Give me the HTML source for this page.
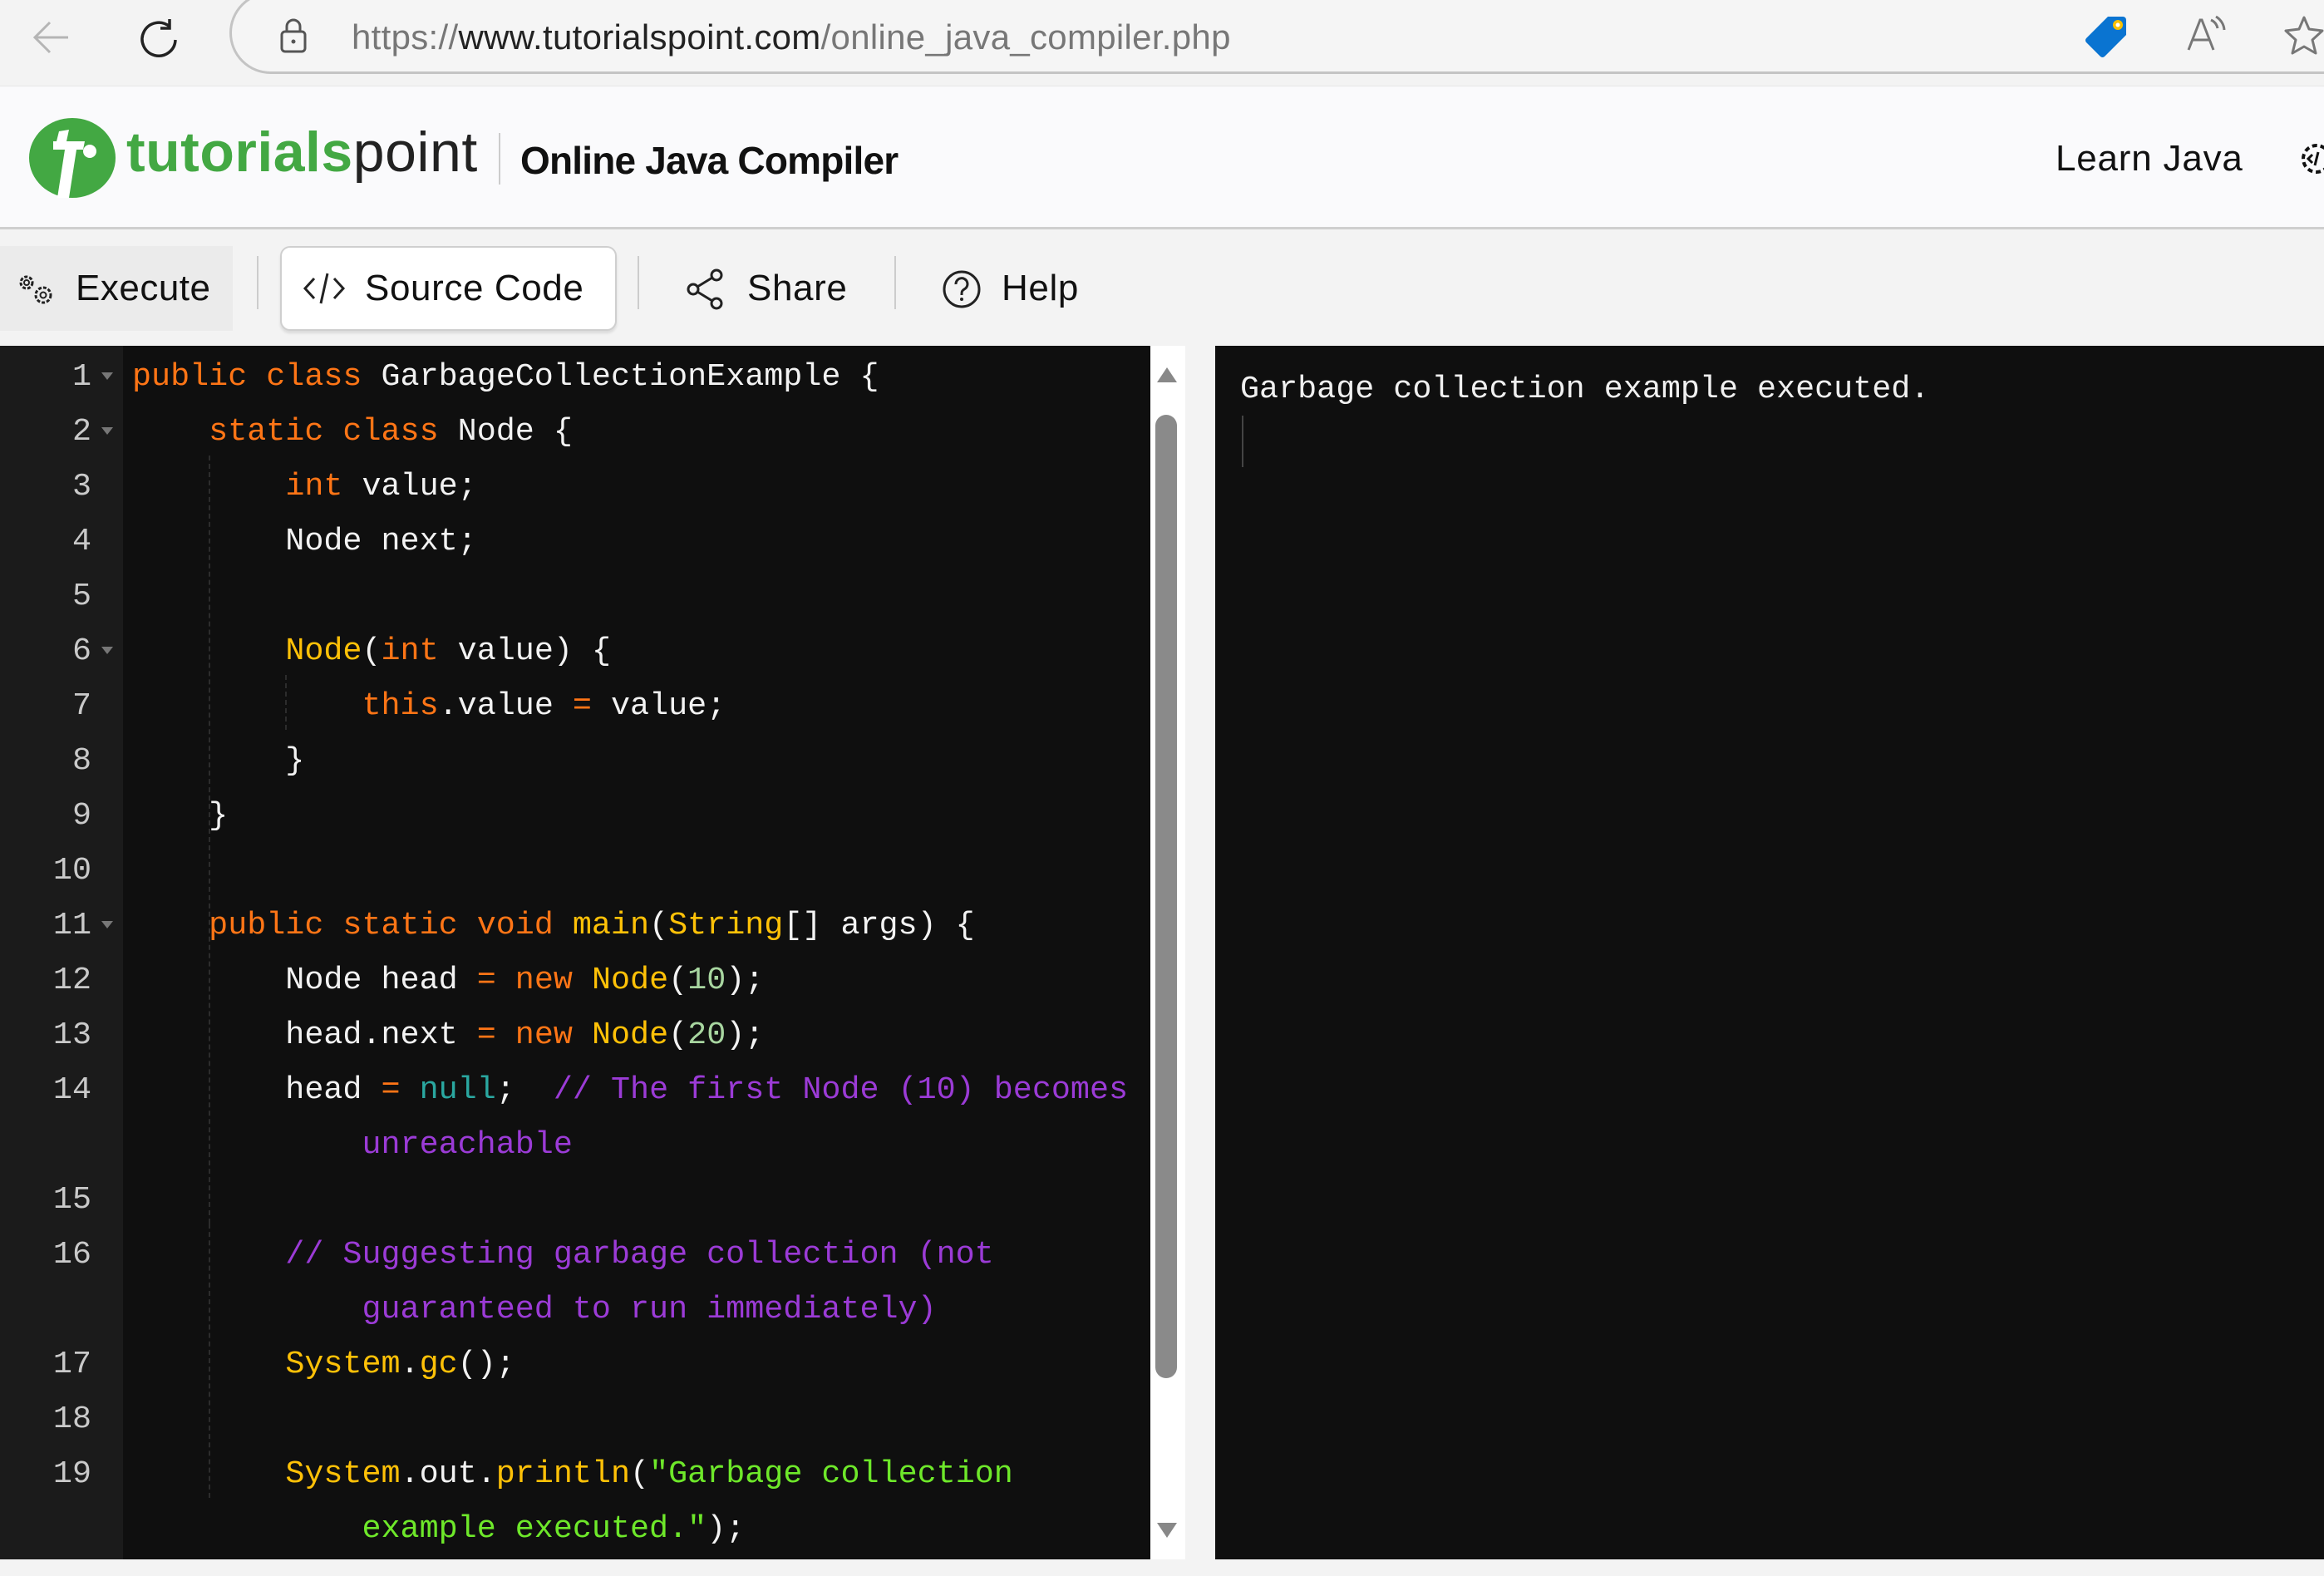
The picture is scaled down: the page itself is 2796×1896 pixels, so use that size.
<!DOCTYPE html>
<html><head><meta charset="utf-8"><style>
*{margin:0;padding:0;box-sizing:border-box}
body{width:2796px;height:1896px;overflow:hidden;background:#f3f3f3;font-family:"Liberation Sans",sans-serif;position:relative}
.abs{position:absolute}
#code{position:absolute;left:0;top:416px;width:1384px;height:1460px;background:#0f0f0f;overflow:hidden}
#gut{position:absolute;left:0;top:0;width:148px;height:100%;background:#1b1b1b}
.ln{position:absolute;left:0;width:110px;text-align:right;color:#c9c9c9;font:38.4px/66px "Liberation Mono",monospace;margin-top:4px}
.fold{position:absolute;left:122px;width:0;height:0;border-left:7px solid transparent;border-right:7px solid transparent;border-top:9px solid #777;margin-top:3px}
.cl{position:absolute;left:159px;white-space:pre;color:#f2f2f2;font:38.4px/66px "Liberation Mono",monospace;margin-top:4px}
.k{color:#ff7516}.y{color:#ffc107}.c{color:#9b3bd6}.n{color:#a8d6a0}.t{color:#2aa7a0}.s{color:#6ee82a}
.g{position:absolute;width:0;border-left:2px dashed #2c2c2c;height:66px}
</style></head><body>
<div class="abs" style="left:0;top:0;width:2796px;height:100px;background:#f3f3f3"></div>
<svg class="abs" style="left:36px;top:22px" width="50" height="46" viewBox="0 0 50 46"><path d="M46 23H6M24 5L6 23l18 18" fill="none" stroke="#b5b5b5" stroke-width="3"/></svg>
<svg class="abs" style="left:166px;top:20px" width="52" height="52" viewBox="0 0 52 52"><path d="M38 12A20 20 0 1 0 45 28" fill="none" stroke="#222" stroke-width="3.5"/><path d="M38 3v11H27" fill="none" stroke="#222" stroke-width="3.5"/></svg>
<div class="abs" style="left:276px;top:-10px;width:2600px;height:99px;border:3px solid #c4c4c4;border-radius:50px;background:#f5f5f5"></div>
<svg class="abs" style="left:334px;top:20px" width="40" height="46" viewBox="0 0 40 46"><rect x="5" y="18" width="28" height="24" rx="4" fill="none" stroke="#555" stroke-width="3"/><path d="M11 18v-6a8 8 0 0 1 16 0v6" fill="none" stroke="#555" stroke-width="3"/><circle cx="19" cy="30" r="2.5" fill="#555"/></svg>
<div class="abs" style="left:423px;top:21px;font-size:42px;color:#777;white-space:nowrap;letter-spacing:0.3px">https://<span style="color:#222">www.tutorialspoint.com</span>/online_java_compiler.php</div>
<svg class="abs" style="left:2508px;top:18px" width="52" height="52" viewBox="0 0 52 52"><path d="M28 2h18a4 4 0 0 1 4 4v18L24 50a4 4 0 0 1-5 0L2 33a4 4 0 0 1 0-5z" fill="#0a74d1"/><circle cx="40" cy="12" r="6" fill="#f7c000"/><circle cx="40" cy="12" r="2.5" fill="#fff"/></svg>
<svg class="abs" style="left:2630px;top:18px" width="50" height="46" viewBox="0 0 50 46"><path d="M3 42L17 6h2l14 36M8 30h20" fill="none" stroke="#777" stroke-width="3"/><path d="M30 6a14 14 0 0 1 8 10M36 2a20 20 0 0 1 10 16" fill="none" stroke="#777" stroke-width="3"/></svg>
<svg class="abs" style="left:2748px;top:18px" width="48" height="50" viewBox="0 0 48 50"><path d="M24 3l6 14 16 2-12 11 4 16-14-8-14 8 4-16L2 19l16-2z" fill="none" stroke="#777" stroke-width="3" stroke-linejoin="round"/></svg>
<div class="abs" style="left:0;top:103px;width:2796px;height:173px;background:#fafafc;border-top:1px solid #e6e6e6;border-bottom:3px solid #cfcfcf"></div>
<svg class="abs" style="left:34px;top:140px" width="106" height="100" viewBox="0 0 106 100"><ellipse cx="53" cy="50" rx="52" ry="48" fill="#43a843"/><path d="M30 40h14l-9 58h14l9-58h8l2-10H46l3-14-12 2-3 12h-4z" fill="#fff"/><circle cx="74" cy="42" r="8" fill="#fff"/></svg>
<div class="abs" style="left:152px;top:144px;font-size:68px;font-weight:bold;color:#43a843;letter-spacing:0.5px;white-space:nowrap">tutorials<span style="color:#222;font-weight:normal">point</span></div>
<div class="abs" style="left:600px;top:160px;width:2px;height:62px;background:#ccc"></div>
<div class="abs" style="left:626px;top:166px;font-size:46px;font-weight:bold;color:#111;white-space:nowrap;letter-spacing:-0.8px">Online Java Compiler</div>
<div class="abs" style="left:2473px;top:166px;font-size:44px;color:#111;white-space:nowrap;letter-spacing:0.8px">Learn Java</div>
<svg class="abs" style="left:2762px;top:166px" width="40" height="50" viewBox="0 0 40 50"><circle cx="25" cy="25" r="16" fill="none" stroke="#111" stroke-width="4" stroke-dasharray="6 4"/><path d="M20 20l-5 5 5 5M27 17l-4 16" fill="none" stroke="#111" stroke-width="3"/></svg>
<div class="abs" style="left:0;top:296px;width:280px;height:102px;background:#ebebeb"></div>
<svg class="abs" style="left:18px;top:326px" width="50" height="44" viewBox="0 0 50 44"><circle cx="14" cy="14" r="7" fill="none" stroke="#222" stroke-width="3" stroke-dasharray="4 2"/><circle cx="14" cy="14" r="3" fill="none" stroke="#222" stroke-width="2"/><circle cx="34" cy="29" r="9" fill="none" stroke="#222" stroke-width="3" stroke-dasharray="4 2"/><circle cx="34" cy="29" r="3.5" fill="none" stroke="#222" stroke-width="2"/></svg>
<div class="abs" style="left:91px;top:322px;font-size:44px;color:#111;letter-spacing:0.5px">Execute</div>
<div class="abs" style="left:309px;top:308px;width:2px;height:64px;background:#ccc"></div>
<div class="abs" style="left:337px;top:296px;width:405px;height:102px;background:#fff;border:2px solid #cfcfcf;border-radius:12px;box-shadow:0 3px 3px rgba(0,0,0,.1)"></div>
<svg class="abs" style="left:364px;top:326px" width="52" height="42" viewBox="0 0 52 42"><path d="M14 9L3 21l11 12M38 9l11 12-11 12M30 3l-8 36" fill="none" stroke="#222" stroke-width="3"/></svg>
<div class="abs" style="left:439px;top:322px;font-size:44px;color:#111;letter-spacing:0.6px">Source Code</div>
<div class="abs" style="left:767px;top:308px;width:2px;height:64px;background:#ccc"></div>
<svg class="abs" style="left:824px;top:322px" width="54" height="52" viewBox="0 0 54 52"><circle cx="38" cy="9" r="6" fill="none" stroke="#222" stroke-width="3"/><circle cx="10" cy="26" r="6" fill="none" stroke="#222" stroke-width="3"/><circle cx="38" cy="43" r="6" fill="none" stroke="#222" stroke-width="3"/><path d="M15 23l18-11M15 29l18 11" stroke="#222" stroke-width="3"/></svg>
<div class="abs" style="left:899px;top:322px;font-size:44px;color:#111;letter-spacing:0.6px">Share</div>
<div class="abs" style="left:1076px;top:308px;width:2px;height:64px;background:#ccc"></div>
<svg class="abs" style="left:1132px;top:323px" width="50" height="50" viewBox="0 0 50 50"><circle cx="25" cy="25" r="21" fill="none" stroke="#222" stroke-width="3"/><path d="M18 19a7 7 0 1 1 10 6c-3 2-3 3-3 7" fill="none" stroke="#222" stroke-width="3"/><circle cx="25" cy="37" r="2" fill="#222"/></svg>
<div class="abs" style="left:1205px;top:322px;font-size:44px;color:#111;letter-spacing:0.6px">Help</div>
<div id="code"><div id="gut"></div>
<div class="ln" style="top:0">1</div><div class="fold" style="top:29px"></div>
<div class="ln" style="top:66px">2</div><div class="fold" style="top:95px"></div>
<div class="ln" style="top:132px">3</div>
<div class="ln" style="top:198px">4</div>
<div class="ln" style="top:264px">5</div>
<div class="ln" style="top:330px">6</div><div class="fold" style="top:359px"></div>
<div class="ln" style="top:396px">7</div>
<div class="ln" style="top:462px">8</div>
<div class="ln" style="top:528px">9</div>
<div class="ln" style="top:594px">10</div>
<div class="ln" style="top:660px">11</div><div class="fold" style="top:689px"></div>
<div class="ln" style="top:726px">12</div>
<div class="ln" style="top:792px">13</div>
<div class="ln" style="top:858px">14</div>
<div class="ln" style="top:990px">15</div>
<div class="ln" style="top:1056px">16</div>
<div class="ln" style="top:1188px">17</div>
<div class="ln" style="top:1254px">18</div>
<div class="ln" style="top:1320px">19</div>
<div class="g" style="left:251px;top:132px;height:924px"></div>
<div class="g" style="left:251px;top:1056px;height:330px"></div>
<div class="g" style="left:343px;top:396px"></div>
<div class="cl" style="top:0"><span class="k">public class</span> GarbageCollectionExample {</div>
<div class="cl" style="top:66px">    <span class="k">static class</span> Node {</div>
<div class="cl" style="top:132px">        <span class="k">int</span> value;</div>
<div class="cl" style="top:198px">        Node next;</div>
<div class="cl" style="top:330px">        <span class="y">Node</span>(<span class="k">int</span> value) {</div>
<div class="cl" style="top:396px">            <span class="k">this</span>.value <span class="k">=</span> value;</div>
<div class="cl" style="top:462px">        }</div>
<div class="cl" style="top:528px">    }</div>
<div class="cl" style="top:660px">    <span class="k">public static void</span> <span class="y">main</span>(<span class="y">String</span>[] args) {</div>
<div class="cl" style="top:726px">        Node head <span class="k">=</span> <span class="k">new</span> <span class="y">Node</span>(<span class="n">10</span>);</div>
<div class="cl" style="top:792px">        head.next <span class="k">=</span> <span class="k">new</span> <span class="y">Node</span>(<span class="n">20</span>);</div>
<div class="cl" style="top:858px">        head <span class="k">=</span> <span class="t">null</span>;  <span class="c">// The first Node (10) becomes</span></div>
<div class="cl c" style="top:924px">            unreachable</div>
<div class="cl c" style="top:1056px">        // Suggesting garbage collection (not</div>
<div class="cl c" style="top:1122px">            guaranteed to run immediately)</div>
<div class="cl" style="top:1188px">        <span class="y">System</span>.<span class="y">gc</span>();</div>
<div class="cl" style="top:1320px">        <span class="y">System</span>.out.<span class="y">println</span>(<span class="s">"Garbage collection</span></div>
<div class="cl" style="top:1386px">            <span class="s">example executed."</span>);</div>
</div>
<div class="abs" style="left:1384px;top:416px;width:42px;height:1460px;background:#fff"></div>
<svg class="abs" style="left:1390px;top:440px" width="28" height="22" viewBox="0 0 28 22"><path d="M14 2L26 20H2z" fill="#888"/></svg>
<div class="abs" style="left:1390px;top:499px;width:26px;height:1159px;background:#8a8a8a;border-radius:13px"></div>
<svg class="abs" style="left:1390px;top:1830px" width="28" height="22" viewBox="0 0 28 22"><path d="M14 20L26 2H2z" fill="#888"/></svg>
<div class="abs" style="left:1462px;top:416px;width:1334px;height:1460px;background:#0f0f0f"></div>
<div class="abs" style="left:1492px;top:438px;font:38.4px/60px 'Liberation Mono',monospace;color:#f0f0f0;white-space:pre">Garbage collection example executed.</div>
<div class="abs" style="left:1494px;top:500px;width:2px;height:62px;background:#444"></div>
</body></html>
